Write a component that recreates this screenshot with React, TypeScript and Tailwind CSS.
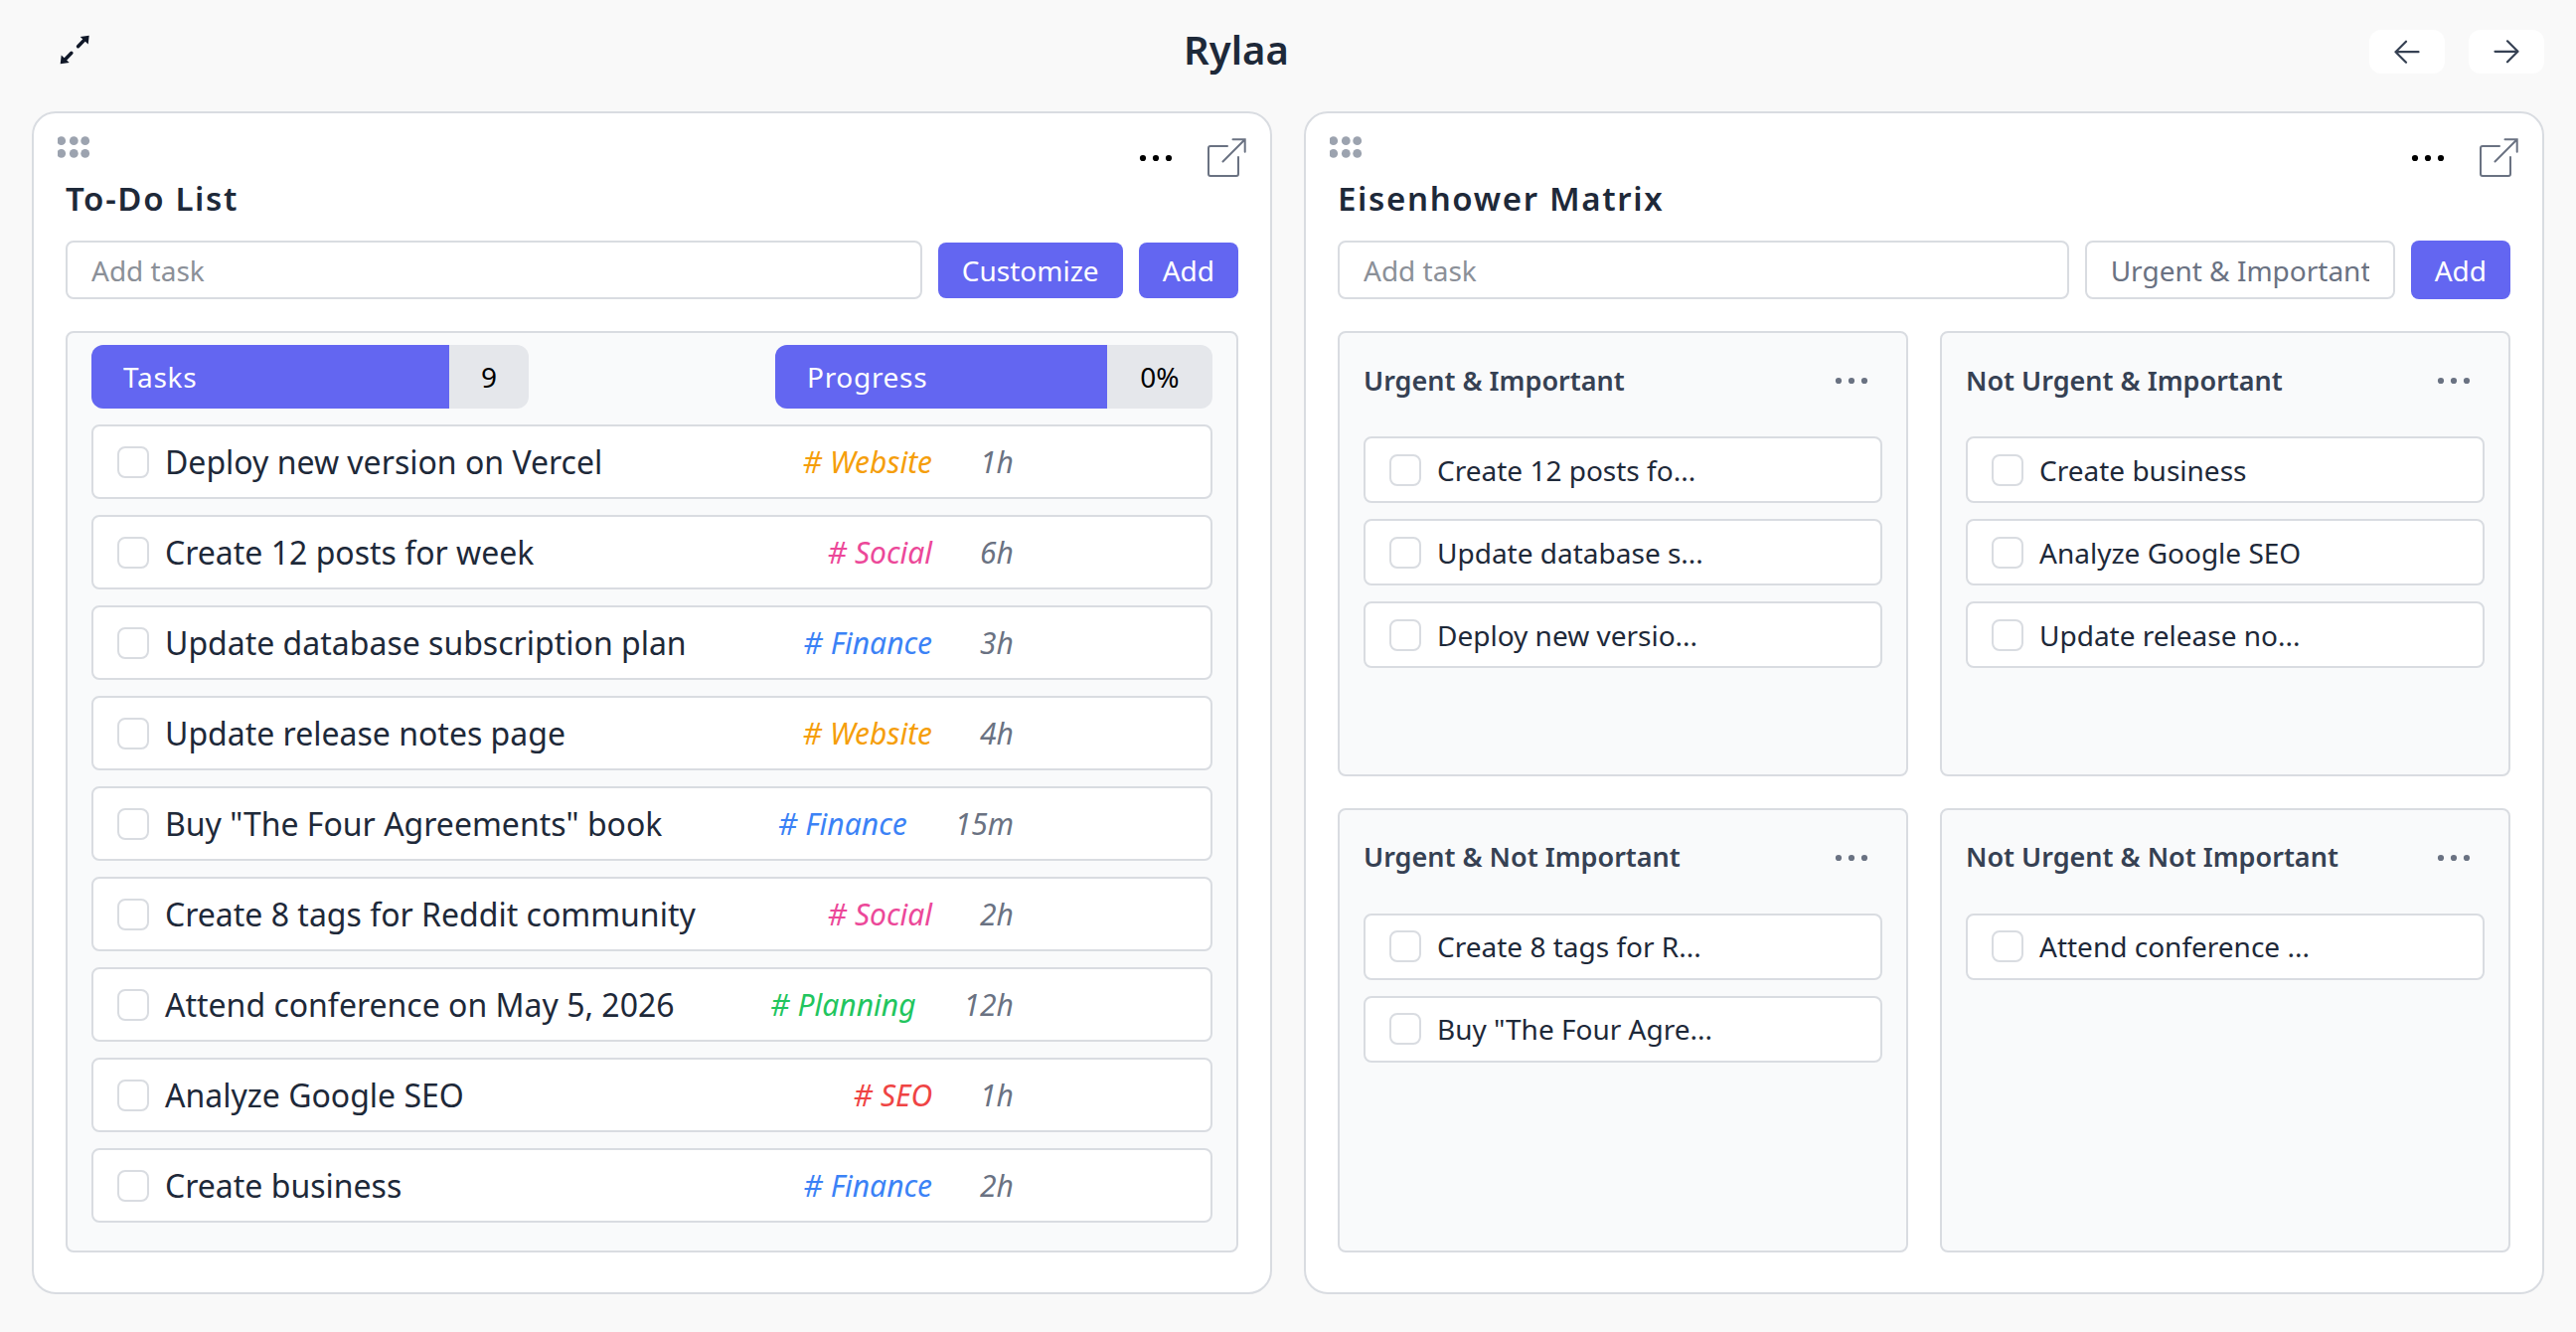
import type { ReactNode } from "react";
import clsx from "clsx";

const TASKS = [
  { name: "Deploy new version on Vercel", tag: "Website", color: "text-[#f59e0b]", time: "1h" },
  { name: "Create 12 posts for week", tag: "Social", color: "text-[#ec4899]", time: "6h" },
  { name: "Update database subscription plan", tag: "Finance", color: "text-[#3b82f6]", time: "3h" },
  { name: "Update release notes page", tag: "Website", color: "text-[#f59e0b]", time: "4h" },
  { name: 'Buy "The Four Agreements" book', tag: "Finance", color: "text-[#3b82f6]", time: "15m" },
  { name: "Create 8 tags for Reddit community", tag: "Social", color: "text-[#ec4899]", time: "2h" },
  { name: "Attend conference on May 5, 2026", tag: "Planning", color: "text-[#22c55e]", time: "12h" },
  { name: "Analyze Google SEO", tag: "SEO", color: "text-[#ef4444]", time: "1h" },
  { name: "Create business", tag: "Finance", color: "text-[#3b82f6]", time: "2h" },
];

const QUADRANTS = [
  { title: "Urgent & Important", items: ["Create 12 posts fo...", "Update database s...", "Deploy new versio..."] },
  { title: "Not Urgent & Important", items: ["Create business", "Analyze Google SEO", "Update release no..."] },
  { title: "Urgent & Not Important", items: ["Create 8 tags for R...", 'Buy "The Four Agre...'] },
  { title: "Not Urgent & Not Important", items: ["Attend conference ..."] },
];

function Dots({ className }: { className?: string }) {
  return (
    <svg viewBox="0 0 36 8" className={clsx("w-9 h-2", className)} fill="currentColor">
      <circle cx="4" cy="4" r="3.1" />
      <circle cx="17" cy="4" r="3.1" />
      <circle cx="30" cy="4" r="3.1" />
    </svg>
  );
}

function Grip() {
  return (
    <svg viewBox="0 0 34 22" className="w-[34px] h-[22px] text-[#9ca3af]" fill="currentColor">
      {[3.7, 16.3, 27.7].map((x) => (
        <g key={x}>
          <circle cx={x} cy="4.700" r="4.4" />
          <circle cx={x} cy="17.400" r="4.4" />
        </g>
      ))}
    </svg>
  );
}

function OpenIcon() {
  return (
    <svg
      viewBox="0 0 40 40"
      className="size-10 text-gray-500"
      fill="none"
      stroke="currentColor"
      strokeWidth="2"
      strokeLinecap="round"
    >
      <path d="M21 8H4a2 2 0 0 0-2 2v26a2 2 0 0 0 2 2h26a2 2 0 0 0 2-2V19" />
      <path d="M26.500 1.300h12.200v12.500M38.700 1.300 16.500 23.500" />
    </svg>
  );
}

function Arrow({ flip }: { flip?: boolean }) {
  return (
    <svg
      viewBox="0 0 26 26"
      className={clsx("size-[26px] text-gray-700", flip && "rotate-180")}
      fill="none"
      stroke="currentColor"
      strokeWidth="2.2"
      strokeLinecap="round"
      strokeLinejoin="round"
    >
      <path d="M24.500 13.200H1.500M12 2.700 1.500 13.200 12 23.700" />
    </svg>
  );
}

function Check({ label }: { label: string }) {
  return (
    <input
      type="checkbox"
      aria-label={label}
      className="appearance-none shrink-0 size-8 rounded-lg border-2 border-[#d9dce1] bg-white"
    />
  );
}

function Card({ title, children }: { title: string; children: ReactNode }) {
  return (
    <section className="flex flex-1 flex-col min-w-0 bg-white border-2 border-[#d9dce1] rounded-3xl px-8 pb-10">
      <div className="flex justify-between h-[66px] pt-[23px] -mx-2">
        <button aria-label="Drag" className="self-start">
          <Grip />
        </button>
        <div className="flex items-center gap-8">
          <button aria-label={`${title} options`}>
            <Dots className="text-black" />
          </button>
          <button aria-label={`Open ${title}`}>
            <OpenIcon />
          </button>
        </div>
      </div>
      <h2 className="text-[33px] leading-10 font-semibold tracking-wider text-gray-800">{title}</h2>
      {children}
    </section>
  );
}

const fieldStyles = "h-[59px] rounded-lg border-2 border-[#d9dce1] bg-white text-[28px]";
const buttonStyles = "rounded-lg bg-[#6366f1] px-6 text-[28px] text-white";

function Stat({ label, value, basis }: { label: string; value: string; basis: string }) {
  return (
    <div className="flex h-16 w-[440px] rounded-xl overflow-hidden bg-gray-200 text-[28px]">
      <div className="flex flex-1 items-center bg-[#6366f1] pl-8 text-white tracking-wide">{label}</div>
      <div className={clsx("flex items-center justify-center text-black", basis)}>{value}</div>
    </div>
  );
}

function TodoList() {
  return (
    <Card title="To-Do List">
      <form className="flex items-center gap-4 mt-[22px]" onSubmit={(e) => e.preventDefault()}>
        <input
          aria-label="Add task"
          placeholder="Add task"
          className={clsx(fieldStyles, "flex-1 min-w-0 px-6 placeholder:text-[#8b9098]")}
        />
        <button type="button" className={clsx(buttonStyles, "h-14")}>Customize</button>
        <button className={clsx(buttonStyles, "h-14")}>Add</button>
      </form>
      <div className="flex-1 mt-8 rounded-lg border-2 border-[#d9dce1] bg-gray-50 px-6 pt-3">
        <div className="flex justify-between">
          <Stat label="Tasks" value="9" basis="w-20" />
          <Stat label="Progress" value="0%" basis="w-[106px]" />
        </div>
        <ul className="mt-4 flex flex-col gap-4">
          {TASKS.map((task) => (
            <li
              key={task.name}
              className="flex items-center h-[75px] rounded-lg border-2 border-[#d9dce1] bg-white pl-6 pr-[198px]"
            >
              <Check label={task.name} />
              <span className="flex-1 ml-4 text-[32px] text-gray-800">{task.name}</span>
              <span className={clsx("text-[30px] italic", task.color)}># {task.tag}</span>
              <span className="ml-12 text-[30px] italic text-gray-500">{task.time}</span>
            </li>
          ))}
        </ul>
      </div>
    </Card>
  );
}

function EisenhowerMatrix() {
  return (
    <Card title="Eisenhower Matrix">
      <form className="flex gap-4 mt-[22px]" onSubmit={(e) => e.preventDefault()}>
        <input
          aria-label="Add task"
          placeholder="Add task"
          className={clsx(fieldStyles, "flex-1 min-w-0 px-6 placeholder:text-[#8b9098]")}
        />
        <select aria-label="Quadrant" className={clsx(fieldStyles, "appearance-none w-[312px] px-6 text-gray-500")}>
          {QUADRANTS.map((q) => (
            <option key={q.title}>{q.title}</option>
          ))}
        </select>
        <button className={buttonStyles}>Add</button>
      </form>
      <div className="flex-1 grid grid-cols-2 grid-rows-2 gap-8 mt-8">
        {QUADRANTS.map((q) => (
          <div key={q.title} className="rounded-lg border-2 border-[#d9dce1] bg-gray-50 px-6">
            <div className="flex items-center justify-between h-24 pr-3">
              <h3 className="text-[27px] font-semibold text-gray-700">{q.title}</h3>
              <button aria-label={`${q.title} options`}>
                <Dots className="text-gray-500" />
              </button>
            </div>
            <ul className="mt-2 flex flex-col gap-4">
              {q.items.map((item) => (
                <li
                  key={item}
                  className="flex items-center h-[67px] rounded-lg border-2 border-[#d9dce1] bg-white px-6"
                >
                  <Check label={item} />
                  <span className="ml-4 text-[28px] text-gray-800">{item}</span>
                </li>
              ))}
            </ul>
          </div>
        ))}
      </div>
    </Card>
  );
}

export default function App() {
  return (
    <div className="flex flex-col min-h-screen bg-[#f9f9f9] px-8 pb-[38px] font-['Noto_Sans',sans-serif]">
      <header className="flex items-center justify-between h-[104px] mb-2">
        <button aria-label="Expand" className="w-[72px] pl-7 pb-1 text-gray-900">
          <svg viewBox="0 0 30 30" className="size-[30px]" fill="currentColor">
            <path d="M29.700.700 28.700 9.600 20.700 2zM.700 29.300 1.700 20.400 9.700 28z" />
            <path
              d="M18.500 11.800 26 4M11.900 18.200 4.400 26"
              stroke="currentColor"
              strokeWidth="3.4"
              strokeLinecap="round"
            />
          </svg>
        </button>
        <h1 className="pb-1 text-[40px] font-semibold text-gray-800">Rylaa</h1>
        <div className="flex gap-6">
          <button aria-label="Previous" className="flex items-center justify-center w-[76px] h-11 rounded-xl bg-white">
            <Arrow />
          </button>
          <button aria-label="Next" className="flex items-center justify-center w-[76px] h-11 rounded-xl bg-white">
            <Arrow flip />
          </button>
        </div>
      </header>
      <main className="flex flex-1 gap-8">
        <TodoList />
        <EisenhowerMatrix />
      </main>
    </div>
  );
}
